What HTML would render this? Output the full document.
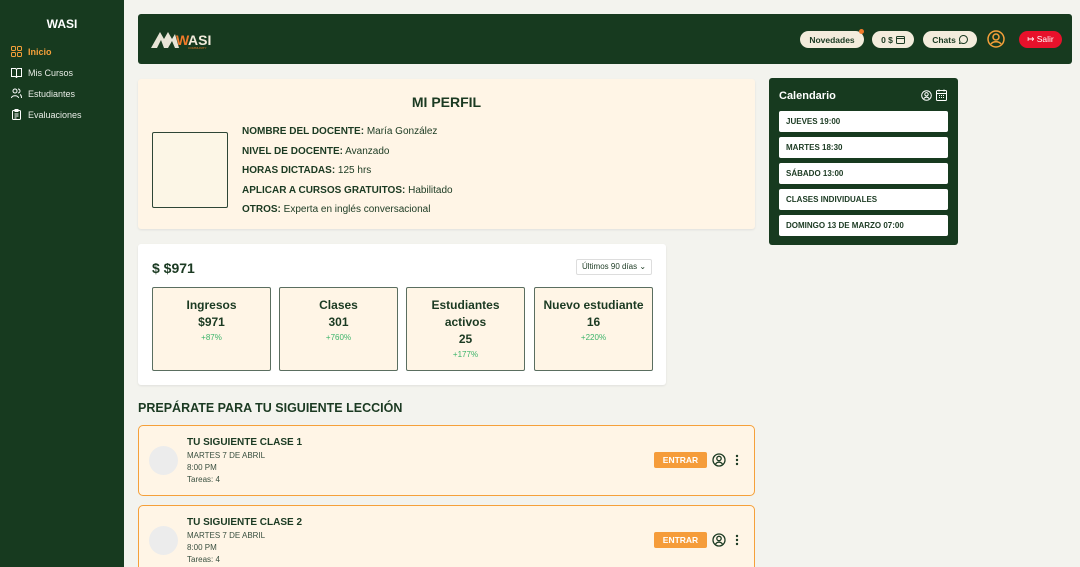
<!DOCTYPE html>
<html><head><meta charset="utf-8"><style>
*{box-sizing:border-box;margin:0;padding:0}
html,body{width:1080px;height:567px;overflow:hidden}
body{background:#f3f3ee;font-family:"Liberation Sans",sans-serif;color:#1b3a22;position:relative}
.side{position:absolute;left:0;top:0;width:124px;height:567px;background:#173a1f;color:#fff}
.side h1{font-size:12px;text-align:center;margin-top:17px;font-weight:bold}
.nav{margin-top:10px}
.nav div{display:flex;align-items:center;height:21px;padding-left:11px;font-size:9px;color:#e8ece6}
.nav div svg{margin-right:6px}
.nav .act{color:#f5a03a;font-weight:bold}
.hdr{position:absolute;left:138px;top:14px;width:934px;height:50px;background:#173a1f;border-radius:3px}
.pill{position:absolute;top:17px;height:17px;background:#f3ecdc;border-radius:9px;font-size:8.5px;font-weight:bold;color:#1b3a22;display:flex;align-items:center;justify-content:center;gap:3px}
.card{position:absolute;background:#fff5e6;border-radius:3px;box-shadow:0 1px 2px rgba(0,0,0,.08)}
.prof p{font-size:10px;margin-bottom:8.5px}
.stat{position:absolute;top:43px;width:119px;height:84px;border:1px solid #5a6e60;border-radius:2px;background:#fff5e6;text-align:center;padding-top:9px}
.stat b{display:block;font-size:12px;line-height:17px}
.stat i{display:block;font-style:normal;color:#3cb46a;font-size:8px;margin-top:2px}
.cal{position:absolute;left:769px;top:78px;width:189px;height:167px;background:#173a1f;border-radius:3px}
.cal .it{position:absolute;left:10px;width:169px;height:21px;background:#fff;border-radius:2px;font-size:8px;font-weight:bold;padding-left:7px;line-height:21px}
.cls{position:absolute;left:138px;width:617px;height:71px;background:#fff5e6;border:1.5px solid #f5a03a;border-radius:5px}
.cls .av{position:absolute;left:10px;top:20px;width:29px;height:29px;border-radius:50%;background:#ececec}
.cls .t{position:absolute;left:48px;top:11px;font-size:10px;font-weight:bold}
.cls .s{position:absolute;left:48px;font-size:8px;color:#3a5040}
.btn{position:absolute;left:515px;top:26px;width:53px;height:16px;background:#f59c3a;color:#fff;font-size:8.5px;font-weight:bold;text-align:center;line-height:16px;border-radius:2px}
</style></head><body>
<div class="side"><h1>WASI</h1>
<div class="nav">
<div class="act"><svg width="11" height="11" viewBox="0 0 11 11" fill="none" stroke="#f5a03a" stroke-width="1"><rect x=".5" y=".5" width="4" height="4" rx="1"/><rect x="6.5" y=".5" width="4" height="4" rx="1"/><rect x=".5" y="6.5" width="4" height="4" rx="1"/><rect x="6.5" y="6.5" width="4" height="4" rx="1"/></svg>Inicio</div>
<div><svg width="11" height="11" viewBox="0 0 11 11" fill="none" stroke="#fff" stroke-width="1"><path d="M.5 1.5h4l1 1 1-1h4v8h-4l-1 1-1-1h-4zM5.5 2.5v8"/></svg>Mis Cursos</div>
<div><svg width="11" height="11" viewBox="0 0 11 11" fill="none" stroke="#fff" stroke-width="1"><circle cx="4" cy="3" r="2"/><path d="M.5 10c0-3 7-3 7 0M7 1a2 2 0 010 4M9 6.5c1 .5 1.5 2 1.5 3.5"/></svg>Estudiantes</div>
<div><svg width="11" height="11" viewBox="0 0 11 11" fill="none" stroke="#fff" stroke-width="1"><rect x="1.5" y="1.5" width="8" height="9" rx="1"/><path d="M4 .5h3v2H4zM3.5 5h4M3.5 7h4M3.5 9h2"/></svg>Evaluaciones</div>
</div></div>

<div class="hdr">
<svg style="position:absolute;left:12px;top:13px" width="70" height="24" viewBox="0 0 70 24"><path d="M1 21L10 5l4 7 4-7 4 7 3-5 4 14z" fill="#e8e4d6"/><path d="M7 21l4-8 3 8zM18 21l4-7 3 7z" fill="#173a1f"/><text x="26" y="18" font-family="Liberation Sans" font-weight="bold" font-size="14" fill="#f07a2a">W</text><text x="38" y="18" font-family="Liberation Sans" font-weight="bold" font-size="14" fill="#f3ecdc">ASI</text><text x="38" y="22" font-family="Liberation Sans" font-size="3" fill="#f07a2a">COMMUNITY</text></svg>
<div class="pill" style="left:662px;width:64px">Novedades<span style="position:absolute;right:0;top:-2px;width:5px;height:5px;background:#f07a2a;border-radius:50%"></span></div>
<div class="pill" style="left:734px;width:42px">0 $ <svg width="9" height="9" viewBox="0 0 9 9" fill="none" stroke="#1b3a22"><rect x=".5" y="1.5" width="8" height="7" rx="1"/><path d="M.5 3.5h8"/></svg></div>
<div class="pill" style="left:785px;width:54px">Chats <svg width="9" height="9" viewBox="0 0 9 9" fill="none" stroke="#1b3a22"><path d="M4.5.5a4 4 0 11-2 7.5L.5 8.5l.5-2A4 4 0 014.5.5z"/></svg></div>
<svg style="position:absolute;left:849px;top:16px" width="18" height="18" viewBox="0 0 18 18" fill="none" stroke="#f5a03a" stroke-width="1.5"><circle cx="9" cy="9" r="8"/><circle cx="9" cy="7" r="3"/><path d="M4 14c2-3 8-3 10 0"/></svg>
<div class="pill" style="left:881px;width:43px;background:#e8112b;color:#fff;font-weight:normal">&#x21A6; Salir</div>
</div>

<div class="card prof" style="left:138px;top:79px;width:617px;height:150px">
<div style="position:absolute;left:0;right:0;top:15px;text-align:center;font-size:14px;font-weight:bold">MI PERFIL</div>
<div style="position:absolute;left:14px;top:53px;width:76px;height:76px;border:1.5px solid #2d4636;border-radius:2px;background:#fcf6e6"></div>
<div style="position:absolute;left:104px;top:47px">
<p><b>NOMBRE DEL DOCENTE:</b> María González</p>
<p><b>NIVEL DE DOCENTE:</b> Avanzado</p>
<p><b>HORAS DICTADAS:</b> 125 hrs</p>
<p><b>APLICAR A CURSOS GRATUITOS:</b> Habilitado</p>
<p><b>OTROS:</b> Experta en inglés conversacional</p>
</div></div>

<div class="card" style="left:138px;top:244px;width:528px;height:141px;background:#fff">
<div style="position:absolute;left:14px;top:16px;font-size:14px;font-weight:bold">$ $971</div>
<div style="position:absolute;left:438px;top:15px;width:76px;height:16px;border:1px solid #ddd;border-radius:2px;font-size:8px;line-height:14px;padding-left:5px">Últimos 90 días ⌄</div>
<div class="stat" style="left:14px"><b>Ingresos</b><b>$971</b><i>+87%</i></div>
<div class="stat" style="left:141px"><b>Clases</b><b>301</b><i>+760%</i></div>
<div class="stat" style="left:268px"><b>Estudiantes</b><b>activos</b><b>25</b><i>+177%</i></div>
<div class="stat" style="left:396px"><b>Nuevo estudiante</b><b>16</b><i>+220%</i></div>
</div>

<div class="cal">
<div style="position:absolute;left:10px;top:12px;color:#fff;font-size:11px;font-weight:bold">Calendario</div>
<svg style="position:absolute;left:152px;top:12px" width="11" height="11" viewBox="0 0 11 11" fill="none" stroke="#fff"><circle cx="5.5" cy="5.5" r="4.8"/><circle cx="5.5" cy="4.3" r="1.7"/><path d="M2.8 8.6c1.5-2 4-2 5.4 0"/></svg>
<svg style="position:absolute;left:167px;top:11px" width="11" height="12" viewBox="0 0 11 12" fill="none" stroke="#fff"><rect x=".5" y="1.5" width="10" height="10" rx="1"/><path d="M.5 4.5h10M3 .5v2M8 .5v2M3 6.5h1M5 6.5h1M7 6.5h1M3 8.5h1M5 8.5h1M7 8.5h1"/></svg>
<div class="it" style="top:33px">JUEVES 19:00</div>
<div class="it" style="top:59px">MARTES 18:30</div>
<div class="it" style="top:85px">SÁBADO 13:00</div>
<div class="it" style="top:111px">CLASES INDIVIDUALES</div>
<div class="it" style="top:137px">DOMINGO 13 DE MARZO 07:00</div>
</div>

<div style="position:absolute;left:138px;top:401px;font-size:12.5px;font-weight:bold">PREPÁRATE PARA TU SIGUIENTE LECCIÓN</div>

<div class="cls" style="top:425px"><div class="av"></div><div class="t">TU SIGUIENTE CLASE 1</div>
<div class="s" style="top:25px">MARTES 7 DE ABRIL</div><div class="s" style="top:37px">8:00 PM</div><div class="s" style="top:49px">Tareas: 4</div>
<div class="btn">ENTRAR</div>
<svg style="position:absolute;left:573px;top:27px" width="14" height="14" viewBox="0 0 14 14" fill="none" stroke="#1b3a22" stroke-width="1.3"><circle cx="7" cy="7" r="6"/><circle cx="7" cy="5.5" r="2.2"/><path d="M3.5 11c2-2.5 5-2.5 7 0"/></svg>
<svg style="position:absolute;left:596px;top:28px" width="4" height="12"><circle cx="2" cy="2" r="1.2" fill="#1b3a22"/><circle cx="2" cy="6" r="1.2" fill="#1b3a22"/><circle cx="2" cy="10" r="1.2" fill="#1b3a22"/></svg>
</div>
<div class="cls" style="top:505px"><div class="av"></div><div class="t">TU SIGUIENTE CLASE 2</div>
<div class="s" style="top:25px">MARTES 7 DE ABRIL</div><div class="s" style="top:37px">8:00 PM</div><div class="s" style="top:49px">Tareas: 4</div>
<div class="btn">ENTRAR</div>
<svg style="position:absolute;left:573px;top:27px" width="14" height="14" viewBox="0 0 14 14" fill="none" stroke="#1b3a22" stroke-width="1.3"><circle cx="7" cy="7" r="6"/><circle cx="7" cy="5.5" r="2.2"/><path d="M3.5 11c2-2.5 5-2.5 7 0"/></svg>
<svg style="position:absolute;left:596px;top:28px" width="4" height="12"><circle cx="2" cy="2" r="1.2" fill="#1b3a22"/><circle cx="2" cy="6" r="1.2" fill="#1b3a22"/><circle cx="2" cy="10" r="1.2" fill="#1b3a22"/></svg>
</div>
</body></html>
